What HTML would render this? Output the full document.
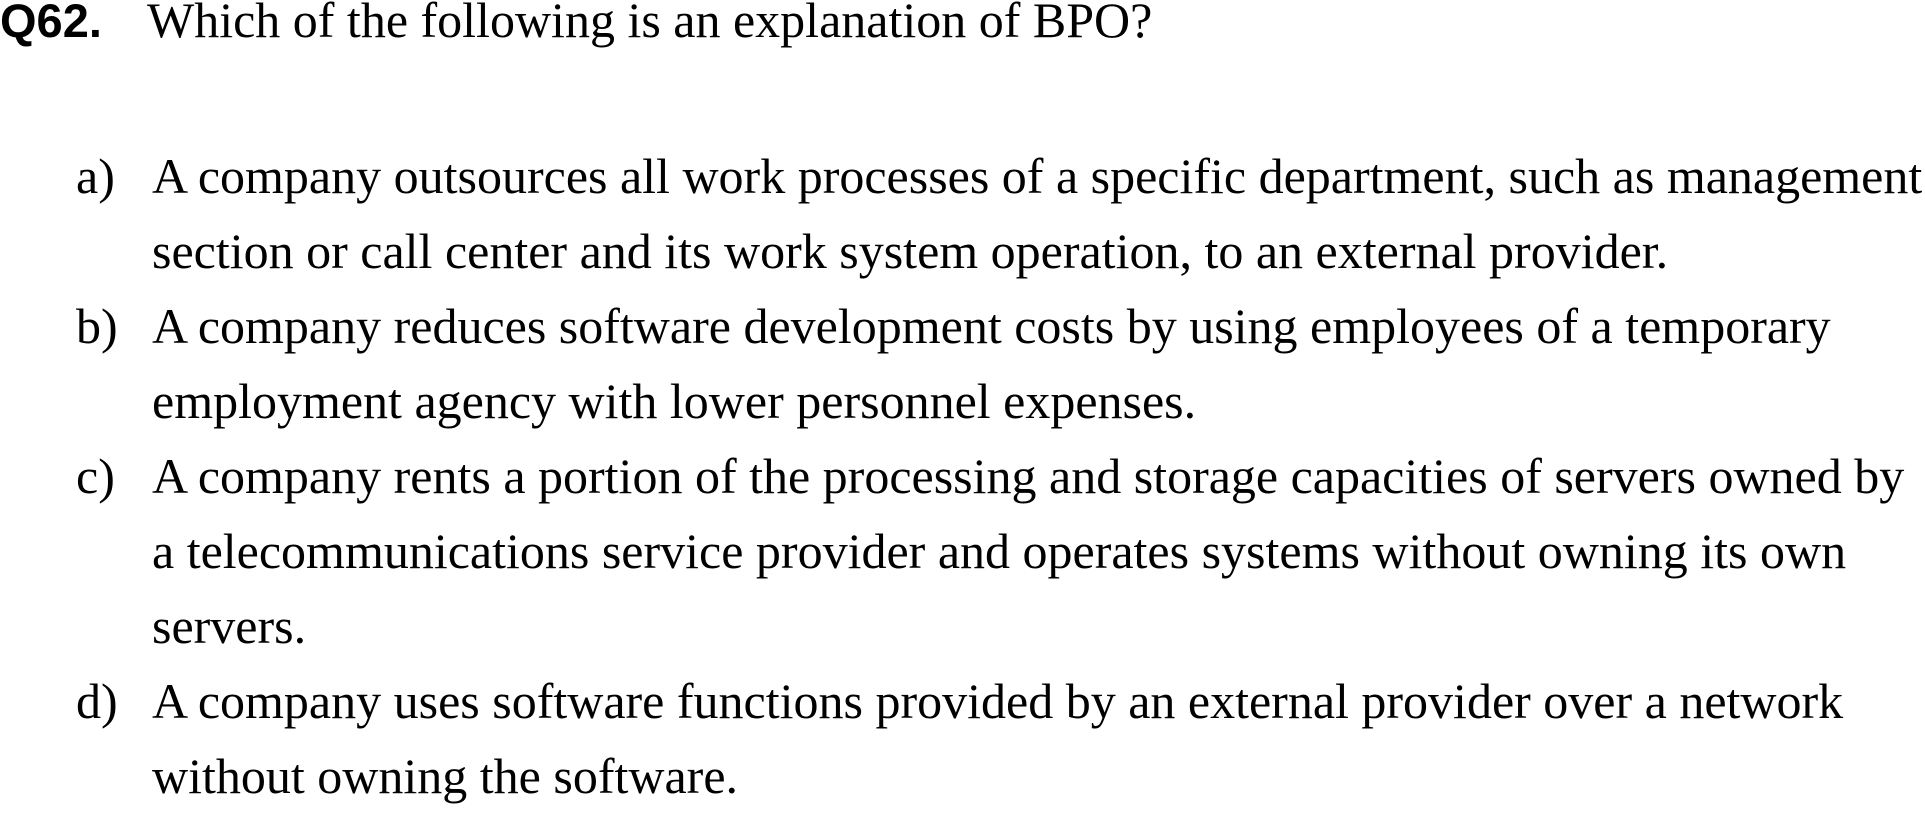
<!DOCTYPE html>
<html><head><style>
body{margin:0;width:1925px;height:802px;background:#fff;overflow:hidden;position:relative;font-family:"Liberation Serif",serif;font-size:50px;color:#000}
.l{position:absolute;line-height:75px;white-space:nowrap}
.q{position:absolute;left:0;top:-17px;line-height:75px;font-family:"Liberation Sans",sans-serif;font-weight:bold;font-size:47px}
</style></head><body>
<div class="q">Q62.</div>
<div class="l" style="left:147px;top:-17px">Which of the following is an explanation of BPO?</div>
<div class="l" style="left:76px;top:139px">a)</div>
<div class="l" style="left:152px;top:139px">A company outsources all work processes of a specific department, such as management</div>
<div class="l" style="left:152px;top:214px">section or call center and its work system operation, to an external provider.</div>
<div class="l" style="left:76px;top:289px">b)</div>
<div class="l" style="left:152px;top:289px">A company reduces software development costs by using employees of a temporary</div>
<div class="l" style="left:152px;top:364px">employment agency with lower personnel expenses.</div>
<div class="l" style="left:76px;top:439px">c)</div>
<div class="l" style="left:152px;top:439px">A company rents a portion of the processing and storage capacities of servers owned by</div>
<div class="l" style="left:152px;top:514px">a telecommunications service provider and operates systems without owning its own</div>
<div class="l" style="left:152px;top:589px">servers.</div>
<div class="l" style="left:76px;top:664px">d)</div>
<div class="l" style="left:152px;top:664px">A company uses software functions provided by an external provider over a network</div>
<div class="l" style="left:152px;top:739px">without owning the software.</div>
</body></html>
